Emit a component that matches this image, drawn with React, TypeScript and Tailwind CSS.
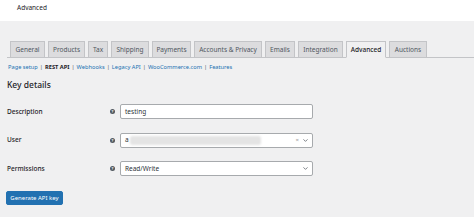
import { ChevronDown } from "lucide-react";

const tabs = [
  { label: "General", w: "w-[35px]" },
  { label: "Products", w: "w-[37px]" },
  { label: "Tax", w: "w-[20px]" },
  { label: "Shipping", w: "w-[38px]" },
  { label: "Payments", w: "w-[39px]" },
  { label: "Accounts & Privacy", w: "w-[68px]" },
  { label: "Emails", w: "w-[30px]" },
  { label: "Integration", w: "w-[45px]" },
  { label: "Advanced", w: "w-[40px]", active: true },
  { label: "Auctions", w: "w-[38px]" },
];

const sections = ["Page setup", "REST API", "Webhooks", "Legacy API", "WooCommerce.com", "Features"];

function Help() {
  return (
    <span className="w-[5px] h-[5px] rounded-full bg-[#50575e] text-white text-[4px] leading-[5px] font-bold flex items-center justify-center">
      ?
    </span>
  );
}

function Row({ label, children }: { label: string; children: React.ReactNode }) {
  return (
    <div className="flex items-center h-[15px]">
      <div className="w-[103px] text-[6.5px] font-medium text-[#1d2327]">{label}</div>
      <div className="w-[10px] flex items-center">
        <Help />
      </div>
      <div className="w-[193px] h-[15px]">{children}</div>
    </div>
  );
}

export default function App() {
  return (
    <div className="w-[474px] h-[217px] bg-[#f0f0f1] overflow-hidden" style={{ fontFamily: '"Noto Sans", "Open Sans", sans-serif' }}>
      <div className="h-[21px] bg-white pl-[17px] pt-[3px] text-[6.5px] text-[#1d2327]">Advanced</div>

      <div className="pl-[7px] pt-[19px]">
        <div className="flex items-end gap-[3px] pl-[3px] border-b border-[#c3c4c7] h-[18px]">
          {tabs.map((t) => (
            <div
              key={t.label}
              className={`${t.w} h-[17px] flex items-center justify-center border border-[#c3c4c7] text-[6.5px] whitespace-nowrap -mb-px ${
                t.active ? "bg-[#f0f0f1] border-b-[#f0f0f1] text-[#1d2327] font-medium" : "bg-[#dcdcde] text-[#50575e]"
              }`}
            >
              {t.label}
            </div>
          ))}
        </div>

        <div className="flex items-center mt-[5px] pl-[1px] text-[5.7px] text-[#2271b1] whitespace-nowrap">
          {sections.map((s, i) => (
            <span key={s} className="flex items-center">
              {i > 0 && <span className="text-[#50575e] mx-[2px]">|</span>}
              <span className={s === "REST API" ? "font-bold text-[#1d2327]" : ""}>{s}</span>
            </span>
          ))}
        </div>

        <div className="mt-[7px] text-[8.5px] font-medium text-[#1d2327]">Key details</div>

        <div className="flex flex-col gap-[13.5px] mt-[13px]">
          <Row label="Description">
            <div className="h-full bg-white border border-[#a7aaad] rounded-[2px] flex items-center pl-[4px] text-[6.5px] text-[#2c3338]">
              testing
            </div>
          </Row>
          <Row label="User">
            <div className="h-full bg-white border border-[#a7aaad] rounded-[2px] flex items-center pl-[4px] pr-[3px] text-[6.5px] text-[#2c3338]">
              <span>a</span>
              <span className="ml-[1px] w-[131px] h-[9px] bg-[#e4e4e4] rounded-[2px] blur-[1px]" />
              <span className="ml-auto text-[#999] text-[6px] mr-[3px]">×</span>
              <ChevronDown className="w-[7px] h-[7px] text-[#50575e]" strokeWidth={2.5} />
            </div>
          </Row>
          <Row label="Permissions">
            <div className="h-full bg-white border border-[#a7aaad] rounded-[2px] flex items-center pl-[4px] pr-[3px] text-[6.5px] text-[#2c3338]">
              <span>Read/Write</span>
              <ChevronDown className="ml-auto w-[7px] h-[7px] text-[#50575e]" strokeWidth={2.5} />
            </div>
          </Row>
        </div>

        <button className="mt-[15px] -ml-[1px] w-[57px] h-[14px] bg-[#2271b1] border border-[#2271b1] rounded-[2px] text-white text-[6px] flex items-center justify-center whitespace-nowrap">
          Generate API key
        </button>
      </div>
    </div>
  );
}
